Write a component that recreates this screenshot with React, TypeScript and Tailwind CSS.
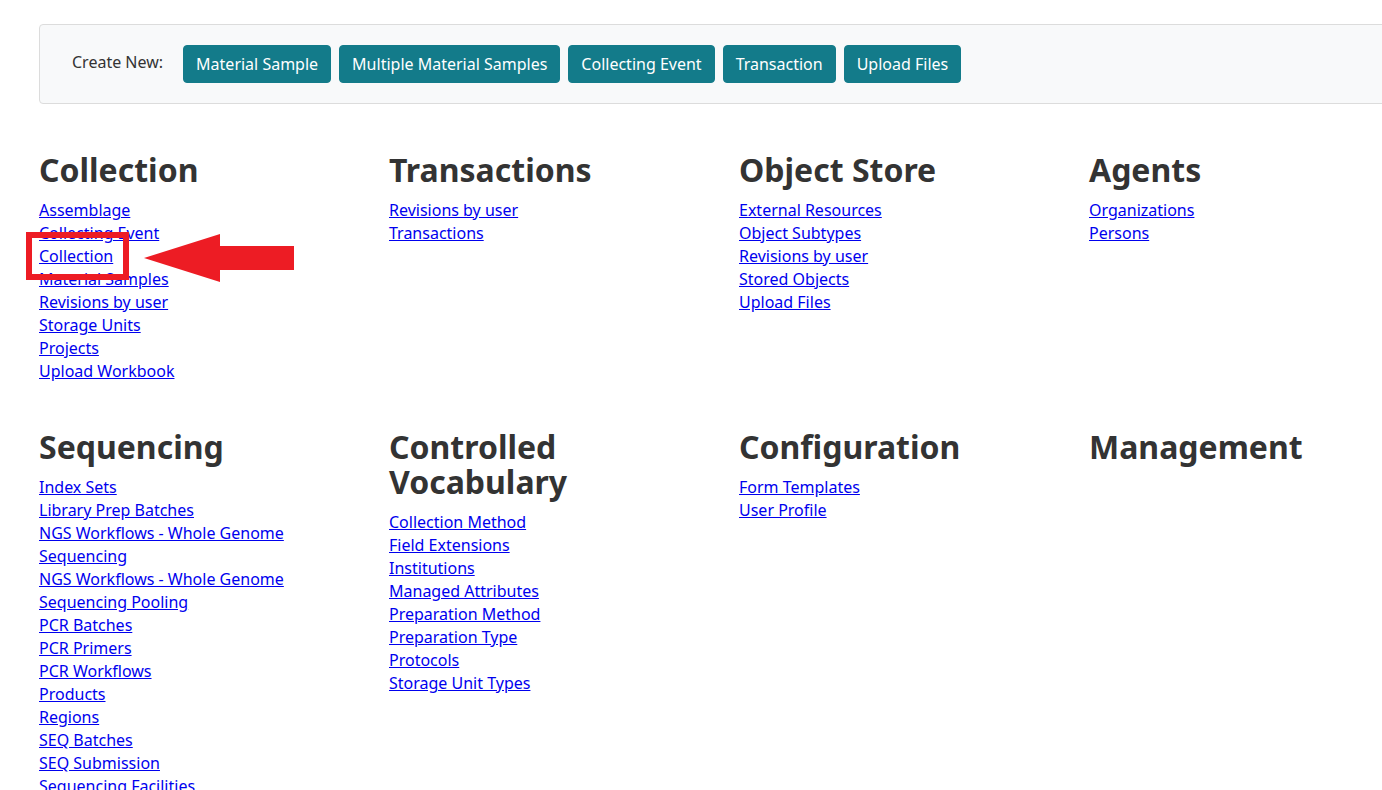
import React from "react";

const sections1 = [
  {
    title: "Collection",
    links: [
      "Assemblage",
      "Collecting Event",
      "Collection",
      "Material Samples",
      "Revisions by user",
      "Storage Units",
      "Projects",
      "Upload Workbook",
    ],
  },
  { title: "Transactions", links: ["Revisions by user", "Transactions"] },
  {
    title: "Object Store",
    links: ["External Resources", "Object Subtypes", "Revisions by user", "Stored Objects", "Upload Files"],
  },
  { title: "Agents", links: ["Organizations", "Persons"] },
];

const sections2 = [
  {
    title: "Sequencing",
    links: [
      "Index Sets",
      "Library Prep Batches",
      "NGS Workflows - Whole Genome Sequencing",
      "NGS Workflows - Whole Genome Sequencing Pooling",
      "PCR Batches",
      "PCR Primers",
      "PCR Workflows",
      "Products",
      "Regions",
      "SEQ Batches",
      "SEQ Submission",
      "Sequencing Facilities",
      "Sequencing Runs",
    ],
  },
  {
    title: "Controlled Vocabulary",
    links: [
      "Collection Method",
      "Field Extensions",
      "Institutions",
      "Managed Attributes",
      "Preparation Method",
      "Preparation Type",
      "Protocols",
      "Storage Unit Types",
    ],
  },
  { title: "Configuration", links: ["Form Templates", "User Profile"] },
  { title: "Management", links: [] as string[] },
];

const buttons = ["Material Sample", "Multiple Material Samples", "Collecting Event", "Transaction", "Upload Files"];

function Section({ title, links }: { title: string; links: string[] }) {
  return (
    <div className="pr-[30px]">
      <h2 className="text-[32px] leading-[35px] font-bold text-[#333333] mb-[12px]">{title}</h2>
      <div className="flex flex-col items-start">
        {links.map((l, i) => (
          <a key={i} href="#" className="text-[16px] leading-[23px] text-[#0000ee] underline">
            {l}
          </a>
        ))}
      </div>
    </div>
  );
}

export default function App() {
  return (
    <div
      className="w-full h-[790px] overflow-hidden bg-white relative"
      style={{ fontFamily: '"Noto Sans", "Open Sans", sans-serif' }}
    >
      <div className="w-[1420px] pl-[39px] pt-[24px]">
        <div className="border border-[#dcdcdc] rounded-[4px] bg-[#f8f9fa] h-[80px] pl-[32px] flex items-center">
          <span className="text-[16px] text-[#333333] mr-[20px] mb-[5px]">Create New:</span>
          <div className="flex gap-[8px]">
            {buttons.map((b) => (
              <button
                key={b}
                className="bg-[#137b8a] border border-[#137b8a] text-white rounded-[4px] px-[12px] py-[6px] text-[16px] leading-[24px]"
              >
                {b}
              </button>
            ))}
          </div>
        </div>

        <div className="grid grid-cols-[350px_350px_350px_350px] mt-[48px]">
          {sections1.map((s) => (
            <Section key={s.title} {...s} />
          ))}
        </div>
        <div className="grid grid-cols-[350px_350px_350px_350px] mt-[46px]">
          {sections2.map((s) => (
            <Section key={s.title} {...s} />
          ))}
        </div>
      </div>

      <div className="absolute left-[26px] top-[232px] w-[103px] h-[48px] border-[6px] border-[#ed1c24]" />
      <svg className="absolute left-[140px] top-[230px]" width="160" height="56" viewBox="0 0 160 56">
        <polygon points="4,28 80,4 80,16 154,16 154,40 80,40 80,52" fill="#ed1c24" />
      </svg>
    </div>
  );
}
